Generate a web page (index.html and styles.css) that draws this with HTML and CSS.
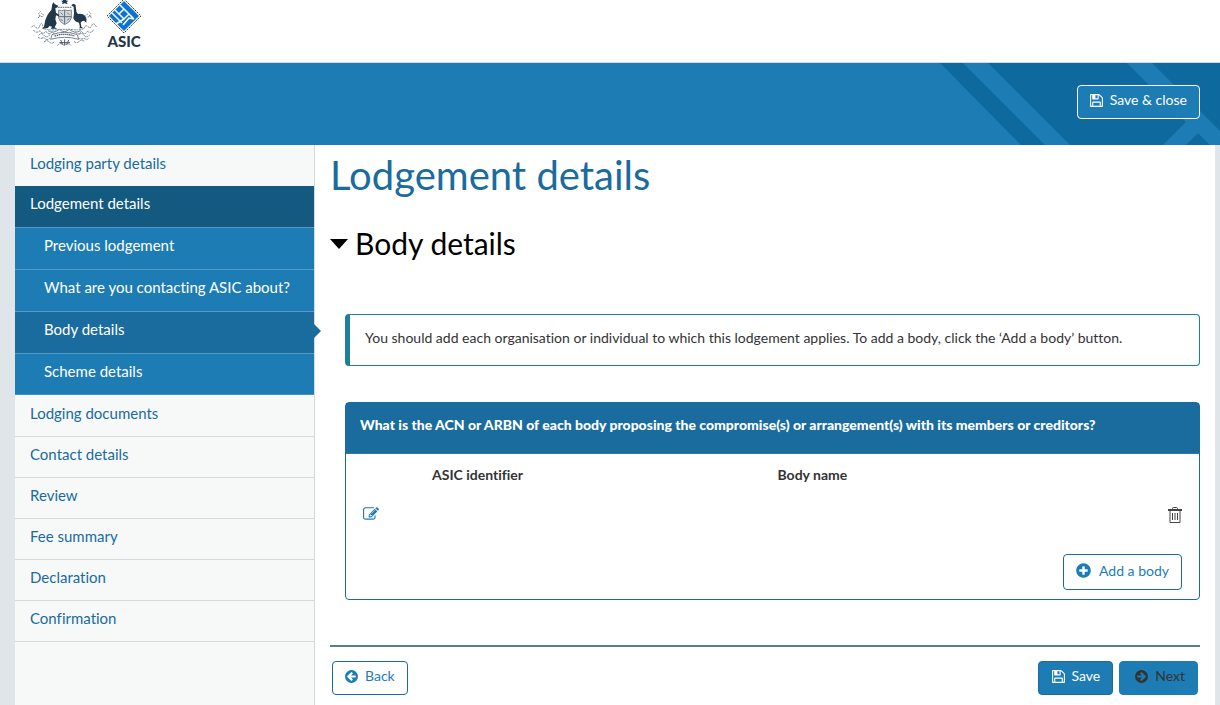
FILE: index.html
```html
<!DOCTYPE html>
<html lang="en">
<head>
<meta charset="utf-8">
<meta name="viewport" content="width=device-width, initial-scale=1">
<title>Lodgement details - ASIC</title>
<link rel="stylesheet" href="styles.css">
</head>
<body>
<svg class="sprite" aria-hidden="true">
  <symbol id="i-save" viewBox="0 0 1792 1792"><path d="M512 1536h768v-384h-768v384zm896 0h128v-896q0-14-10-38.5t-20-34.5l-281-281q-10-10-34-20t-39-10v416q0 40-28 68t-68 28h-576q-40 0-68-28t-28-68v-416h-128v1280h128v-416q0-40 28-68t68-28h832q40 0 68 28t28 68v416zm-384-928v-320q0-13-9.5-22.5t-22.5-9.5h-192q-13 0-22.5 9.5t-9.5 22.5v320q0 13 9.5 22.5t22.5 9.5h192q13 0 22.5-9.5t9.5-22.5zm640 32v928q0 40-28 68t-68 28h-1344q-40 0-68-28t-28-68v-1344q0-40 28-68t68-28h928q40 0 88 20t76 48l280 280q28 28 48 76t20 88z"/></symbol>
  <symbol id="i-plus" viewBox="0 0 1792 1792"><path d="M1344 960v-128q0-26-19-45t-45-19h-256v-256q0-26-19-45t-45-19h-128q-26 0-45 19t-19 45v256h-256q-26 0-45 19t-19 45v128q0 26 19 45t45 19h256v256q0 26 19 45t45 19h128q26 0 45-19t19-45v-256h256q26 0 45-19t19-45zm320-64q0 209-103 385.5t-279.5 279.5-385.5 103-385.5-103-279.5-279.5-103-385.5 103-385.5 279.5-279.5 385.5-103 385.5 103 279.5 279.5 103 385.5z"/></symbol>
  <symbol id="i-left" viewBox="0 0 1792 1792"><path d="M1408 960v-128q0-26-19-45t-45-19h-502l189-189q19-19 19-45t-19-45l-91-91q-18-18-45-18t-45 18l-362 362-91 91q-18 18-18 45t18 45l91 91 362 362q18 18 45 18t45-18l91-91q18-18 18-45t-18-45l-189-189h502q26 0 45-19t19-45zm256-64q0 209-103 385.5t-279.5 279.5-385.5 103-385.5-103-279.5-279.5-103-385.5 103-385.5 279.5-279.5 385.5-103 385.5 103 279.5 279.5 103 385.5z"/></symbol>
  <symbol id="i-edit" viewBox="0 0 1792 1792"><path d="M888 1184l116-116-152-152-116 116v56h96v96h56zm440-720q-16-16-33 1l-350 350q-17 17-1 33t33-1l350-350q17-17 1-33zm80 594v190q0 119-84.5 203.5t-203.5 84.5h-832q-119 0-203.5-84.5t-84.5-203.5v-832q0-119 84.5-203.5t203.5-84.5h832q63 0 117 25 15 7 18 23 3 17-9 29l-49 49q-14 14-32 8-23-6-45-6h-832q-66 0-113 47t-47 113v832q0 66 47 113t113 47h832q66 0 113-47t47-113v-126q0-13 9-22l64-64q15-15 35-7t20 29zm-96-738l288 288-672 672h-288v-288zm444 132l-92 92-288-288 92-92q28-28 68-28t68 28l152 152q28 28 28 68t-28 68z"/></symbol>
</svg>

<header class="masthead">
  <svg class="arms" viewBox="30 0 204 144" role="img" aria-label="Australian Government coat of arms">
    <g fill="none" stroke="#7d8996" stroke-width="3">
      <path d="M62 34l-6 6 4 8-6 6M64 40l8 6M56 48l14 2" stroke-dasharray="5 2"/>
      <path d="M206 34l6 6-4 8 8 6M204 42l-8 4M214 48l-14 4" stroke-dasharray="5 2"/>
      <path d="M34 82q8-10 14 0t12-6 10 10q20 6 50 2h30q30 4 42-2 4-14 12-6t12-4 14 6" stroke-dasharray="6 2"/>
      <path d="M40 90q10 12 20 2 8 14 18 2 8 14 18 2 8 10 18 2M150 96q8 10 16 0 10 12 18-2 10 14 18 0 12 8 20-6" stroke-dasharray="7 2"/>
      <path d="M56 106q8-10 16 0t18-2M54 112q10 6 18 0 8 12 18 2M176 104q10-8 16 2t18-2M174 114q10 6 18 0 8 8 16 0" stroke-dasharray="7 2"/>
      <path d="M72 126q8-8 16 0 8 8 16-2M162 124q8 8 16 0 8-8 16 2M112 136q10-10 20 0 12-8 22 0" stroke-dasharray="7 2"/>
      <path d="M84 92q16 10 34-4 14 14 30 0 16 14 34 4"/>
    </g>
    <path d="M116 30q8 4 18 0 10 4 20 0v24q-2 12-20 20-16-8-18-20z" fill="#d6dade" stroke="#7d8996" stroke-width="3"/>
    <path d="M116 50h38M134 30v42M122 38l6 6M142 38l6 6M122 58l6 4M142 60l6-4" fill="none" stroke="#5c6b7a" stroke-width="3"/>
    <path d="M114 22h40" fill="none" stroke="#77838f" stroke-width="4" stroke-dasharray="5 2"/>
    <path d="M130-4h8l1 6 6 0-5 5 3 6-9-3-8 3 2-6-5-5 6 0z" fill="#23374b"/>
    <path d="M97 12l4-5 3 5 10 5-1 5-7 3 2 13 10 7-2 4-8-3-2 12 4 12-6 12 8 4H92l4-6-8-2-4 6-18 2 6-6q2-20 10-34 6-10 12-16z" fill="#23374b"/>
    <path d="M155 14l6-3 6 4 1 11q0 12 6 16 14-2 22 6 6 10 3 20l-7-6-6 2-4 4 2 12 6 5h-14l4-3-3-14q-13-2-17-14l2-14-1-20-6-3z" fill="#23374b"/>
    <path d="M96 104q38-14 76 0l4 14q-42-12-84 0z" fill="#fff" stroke="#7a8591" stroke-width="3"/>
    <path d="M104 108q30-10 60 0" fill="none" stroke="#46576a" stroke-width="4" stroke-dasharray="4 2"/>
    <path d="M122 120l6 14M134 118v18M146 120l-6 14M118 128h32" fill="none" stroke="#46576a" stroke-width="3"/>
  </svg>
  <div class="asic">
    <svg class="diamond" viewBox="0 0 36 34" aria-hidden="true">
      <path d="M18-1L35 16 18 33 1 16z" fill="#fff" stroke="#3a3f4a" stroke-width="1" stroke-dasharray="2 1"/>
      <path d="M18 1L33 16 18 31 3 16z" fill="#0b74d1"/>
      <path d="M14 5l14 14M9 10l9 9 5-5M18 19l-8 5M18 9l-5 5M6 13l10 10M28 19l-5-1-6 7" fill="none" stroke="#fff" stroke-width="1.500"/>
    </svg>
    <span class="asic-name">ASIC</span>
  </div>
</header>

<div class="banner">
  <svg class="banner-art" viewBox="0 0 280 82" aria-hidden="true">
    <path d="M0 0h23l82 82H81zM48 0h232v82H130z" fill="#0e699f"/>
    <path d="M187 0h25l68 68v14h-10l-12-12-12 12h-23l23-23z" fill="#1e7cb5"/>
  </svg>
  <button type="button" class="btn btn-light"><svg class="icon"><use href="#i-save"/></svg>Save &amp; close</button>
</div>

<div class="page">
  <nav class="sidebar" aria-label="Lodgement steps">
    <ul class="steps">
      <li><a href="#party">Lodging party details</a></li>
      <li class="open"><a href="#lodgement">Lodgement details</a>
        <ul class="substeps">
          <li><a href="#previous">Previous lodgement</a></li>
          <li><a href="#contacting">What are you contacting ASIC about?</a></li>
          <li class="current"><a href="#body" aria-current="step">Body details</a></li>
          <li><a href="#scheme">Scheme details</a></li>
        </ul>
      </li>
      <li><a href="#documents">Lodging documents</a></li>
      <li><a href="#contact">Contact details</a></li>
      <li><a href="#review">Review</a></li>
      <li><a href="#fees">Fee summary</a></li>
      <li><a href="#declaration">Declaration</a></li>
      <li><a href="#confirmation">Confirmation</a></li>
    </ul>
  </nav>

  <main class="content">
    <h1>Lodgement details</h1>
    <h2><button type="button" class="toggle" aria-expanded="true"><svg class="caret" viewBox="0 0 18 12" aria-hidden="true"><path d="M0 2h18L9 12z"/></svg>Body details</button></h2>

    <section class="section">
      <p class="info">You should add each organisation or individual to which this lodgement applies. To add a body, click the ‘Add a body’ button.</p>

      <div class="panel">
        <h3>What is the ACN or ARBN of each body proposing the compromise(s) or arrangement(s) with its members or creditors?</h3>
        <table>
          <thead>
            <tr><th class="col-edit"></th><th scope="col">ASIC identifier</th><th scope="col">Body name</th><th class="col-delete"></th></tr>
          </thead>
          <tbody>
            <tr>
              <td><button type="button" class="icon-btn edit" aria-label="Edit body"><svg class="icon-edit"><use href="#i-edit"/></svg></button></td>
              <td></td>
              <td></td>
              <td class="delete-cell"><button type="button" class="icon-btn delete" aria-label="Delete body"><svg class="icon-trash" viewBox="0 0 14 16" fill="none" stroke="currentColor"><path d="M0 3h14" stroke-width="2"/><path d="M4.500 2.500v-1q0-1 1-1h3q1 0 1 1v1M2 4v11.500h10V4M4.500 6v7M7 6v7M9.500 6v7"/></svg></button></td>
            </tr>
          </tbody>
        </table>
        <div class="panel-actions">
          <button type="button" class="btn btn-outline btn-add"><svg class="icon icon-lg"><use href="#i-plus"/></svg>Add a body</button>
        </div>
      </div>
    </section>

    <div class="footer-actions">
      <button type="button" class="btn btn-outline"><svg class="icon"><use href="#i-left"/></svg>Back</button>
      <div class="forward">
        <button type="button" class="btn btn-solid"><svg class="icon"><use href="#i-save"/></svg>Save</button>
        <button type="button" class="btn btn-solid btn-next"><svg class="icon flip"><use href="#i-left"/></svg>Next</button>
      </div>
    </div>
  </main>
</div>
</body>
</html>
```
FILE: styles.css
```css
* { box-sizing: border-box; }

body {
  margin: 0;
  min-height: 100vh;
  display: flex;
  flex-direction: column;
  background: #e0e5e9;
  color: #333;
  font: 14px/20px Lato, "Open Sans", sans-serif;
  font-variant-ligatures: none;
}

h1, h2, h3, p, ul { margin: 0; padding: 0; font-weight: 400; }
ul { list-style: none; }
button { font: inherit; font-variant-ligatures: none; cursor: pointer; }
.sprite { display: none; }

.masthead {
  display: flex;
  align-items: flex-start;
  gap: 8px;
  height: 63px;
  padding-left: 30px;
  background: #fff;
  border-bottom: 1px solid #d5d9dc;
}
.arms { width: 68px; height: 48px; }
.asic { display: flex; flex-direction: column; align-items: center; }
.diamond { width: 36px; height: 34px; }
.asic-name { font-size: 15px; line-height: 15px; font-weight: 900; color: #23374b; }

.banner {
  position: relative;
  display: flex;
  justify-content: flex-end;
  align-items: center;
  height: 82px;
  padding: 0 20px 4px;
  background: #1e7cb5;
}
.banner-art { position: absolute; top: 0; right: 0; width: 280px; height: 82px; }

.btn {
  position: relative;
  display: inline-flex;
  align-items: center;
  gap: 6px;
  height: 34px;
  padding: 0 12px 4px;
  border: 1px solid #1a6b9e;
  border-radius: 4px;
}
.icon { width: 15px; height: 15px; fill: currentColor; }
.icon-lg { width: 17px; height: 17px; }
.flip { transform: scaleX(-1); }
.btn-light { padding-left: 11px; border-color: #fff; background: #1e7cb5; color: #fff; }
.btn-outline { padding-left: 11px; background: #fff; color: #1e7cb5; }
.btn-solid { background: #1e7cb5; color: #fff; }
.btn-next { padding-left: 14px; border-color: #1e7cb5; color: #333; }
.btn-add { gap: 7px; height: 36px; padding-bottom: 3px; }

.page { flex: 1; display: flex; margin: 0 5px 0 15px; background: #fff; }

.sidebar {
  flex: 0 0 300px;
  background: #f7f9f8;
  border-right: 1px solid #d5d9db;
  font-size: 15px;
}
.sidebar a {
  display: block;
  padding: 7px 15px 13px;
  color: #1a6b9e;
  text-decoration: none;
}
.steps > li { border-bottom: 1px solid #d5d9db; }
.steps > li:first-child { padding-top: 1px; border-bottom: 0; }
.steps > .open { border-bottom-color: #3f93c6; }
.steps > .open + li { padding-top: 1px; }
.open > a { padding-bottom: 14px; background: #14597f; color: #fff; }
.substeps li { position: relative; border-top: 1px solid #4f9ccb; background: #1e7cb5; }
.substeps a { padding: 7px 16px 14px 29px; color: #fff; }
.substeps li:last-child a { padding-bottom: 13px; }
.substeps .current { background: #1a6b9e; }
.substeps .current::after {
  content: "";
  position: absolute;
  top: 12px;
  right: -7px;
  border: solid transparent;
  border-width: 7px 0 7px 7px;
  border-left-color: #1a6b9e;
}

.content { flex: 1; min-width: 0; padding: 6px 15px 10px; }
h1 { color: #1a6b9e; font-size: 40px; line-height: 48px; }
h2 { margin-top: 24px; color: #000; font-size: 30px; line-height: 40px; }
.toggle {
  display: flex;
  align-items: center;
  gap: 7px;
  padding: 0;
  border: 0;
  background: none;
  color: inherit;
}
.caret { width: 18px; height: 12px; }

.section { padding: 51px 0 45px 15px; }
.info {
  padding: 13px 15px 17px;
  border: 1px solid #1c7f9c;
  border-left-width: 5px;
  border-radius: 4px;
}
.panel { margin-top: 36px; border: 1px solid #1a6b9e; border-radius: 4px; }
h3 {
  padding: 12px 14px 18px;
  background: #1a6b9e;
  border-bottom: 1px solid #2f7ba5;
  color: #fff;
  font-size: 14px;
  line-height: 20px;
  font-weight: 900;
}
table { width: 100%; border-collapse: collapse; table-layout: fixed; }
th { height: 42px; padding: 0; text-align: left; font-weight: 700; }
.col-edit { width: 86px; }
.col-delete { width: 76px; }
td { height: 40px; padding: 0 17px; }
.delete-cell { text-align: right; }
.icon-btn { display: inline-flex; padding: 0; border: 0; background: none; }
.edit { color: #1e7cb5; }
.delete { padding-top: 2px; color: #444; }
.icon-edit { width: 16px; height: 16px; fill: currentColor; }
.icon-trash { width: 14px; height: 16px; }
.panel-actions { display: flex; justify-content: flex-end; padding: 18px 17px 9px; }

.footer-actions {
  display: flex;
  justify-content: space-between;
  padding: 14px 2px 0;
  border-top: 2px solid #5a7f8c;
}
.forward { display: flex; gap: 6px; }
```
